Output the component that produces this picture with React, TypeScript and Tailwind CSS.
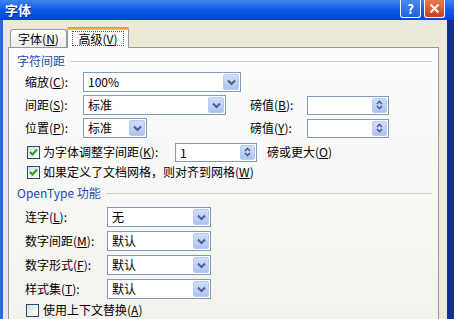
import React from "react";

function Key({ k }: { k: string }) {
  return (
    <>
      (<u>{k}</u>)
    </>
  );
}

function DropBtn() {
  return (
    <div className="flex w-[16px] items-center justify-center rounded-[2px] border border-[#b9cbf3] bg-gradient-to-b from-[#d0defd] to-[#adc3f3]">
      <svg width="9" height="7" viewBox="0 0 9 7">
        <path d="M1 1.5 L4.5 5 L8 1.5" fill="none" stroke="#4d6185" strokeWidth="2" />
      </svg>
    </div>
  );
}

function SpinBtn() {
  return (
    <div className="flex w-[15px] items-center justify-center rounded-[2px] border border-[#b9cbf3] bg-gradient-to-b from-[#d0defd] to-[#adc3f3]">
      <svg width="9" height="12" viewBox="0 0 9 12">
        <path d="M2 5 L4.5 2.5 L7 5" fill="none" stroke="#4d6185" strokeWidth="1.6" />
        <path d="M2 7 L4.5 9.5 L7 7" fill="none" stroke="#4d6185" strokeWidth="1.6" />
      </svg>
    </div>
  );
}

function Combo({ w, value }: { w: string; value?: string }) {
  return (
    <div className={`flex h-[20px] border border-[#7f9db9] bg-white p-px ${w}`}>
      <span className="flex-1 pl-[3px] text-[12px] leading-[16px]">{value}</span>
      <DropBtn />
    </div>
  );
}

function Spin({ value }: { value?: string }) {
  return (
    <div className="flex h-[19px] w-[82px] border border-[#7f9db9] bg-white p-px">
      <span className="flex-1 pl-[3px] text-[12px] leading-[15px]">{value}</span>
      <SpinBtn />
    </div>
  );
}

function Check({ on }: { on?: boolean }) {
  return (
    <div className="flex h-[13px] w-[13px] shrink-0 items-center justify-center border border-[#1c5180] bg-gradient-to-br from-[#dcdcd7] to-white">
      {on && (
        <svg width="11" height="11" viewBox="0 0 11 11">
          <path d="M2 5 L4.5 7.5 L9 2.5" fill="none" stroke="#21a121" strokeWidth="2" />
        </svg>
      )}
    </div>
  );
}

function Group({ title }: { title: string }) {
  return (
    <div className="flex h-[14px] items-center pl-[8px] pr-[6px]">
      <span className="text-[12px] leading-[14px] text-[#1f4aa8]">{title}</span>
      <div className="ml-[5px] h-px flex-1 bg-[#d0d0bf]" />
    </div>
  );
}

function Row({ label, lw, children, mt }: { label: React.ReactNode; lw: string; children: React.ReactNode; mt: string }) {
  return (
    <div className={`flex h-[20px] items-center pl-[16px] ${mt}`}>
      <span className={`text-[12px] ${lw}`}>{label}</span>
      {children}
    </div>
  );
}

export default function App() {
  return (
    <div className="relative h-[319px] w-[454px] overflow-hidden bg-[#ece9d8] font-['Noto_Sans_CJK_SC',sans-serif] text-black">
      {/* title bar */}
      <div className="flex h-[20px] items-start justify-between bg-gradient-to-b from-[#3d83f0] via-[#0b5ae6] to-[#0046d4] pl-[5px] pr-[9px]">
        <span className="mt-[1px] text-[13px] font-bold leading-[17px] text-white [text-shadow:1px_1px_0_#0a2a8a]">字体</span>
        <div className="flex gap-[3px]">
          <div className="flex h-[18px] w-[21px] items-center justify-center rounded-b-[3px] border border-t-0 border-white bg-gradient-to-b from-[#4a8af5] to-[#1f5fe0] text-[13px] font-bold leading-none text-white">
            ?
          </div>
          <div className="flex h-[18px] w-[21px] items-center justify-center rounded-b-[3px] border border-t-0 border-white bg-gradient-to-b from-[#ea7a52] to-[#cc3e14]">
            <svg width="11" height="11" viewBox="0 0 11 11">
              <path d="M1.5 1.5 L9.5 9.5 M9.5 1.5 L1.5 9.5" stroke="white" strokeWidth="2" />
            </svg>
          </div>
        </div>
      </div>

      <div className="flex h-[299px]">
        <div className="w-[3px] bg-[#2f67dc]" />
        <div className="flex-1 pl-[5px] pr-[8px]">
          {/* tabs */}
          <div className="flex h-[27px] items-end pl-[2px]">
            <div className="flex h-[18px] w-[57px] items-center justify-center rounded-t-[3px] border border-b-0 border-[#919b9c] bg-gradient-to-b from-white to-[#ecebe6] text-[12px]">
              字体<Key k="N" />
            </div>
            <div className="relative z-10 -mb-px flex h-[21px] w-[62px] flex-col rounded-t-[3px] border border-b-0 border-[#919b9c] bg-[#fcfcfe]">
              <div className="-mx-px -mt-px h-[3px] rounded-t-[3px] bg-gradient-to-b from-[#e68b2c] to-[#ffc73c]" />
              <div className="mx-[4px] mt-[1px] flex h-[15px] items-center justify-center border border-dotted border-[#555] text-[12px]">
                高级<Key k="V" />
              </div>
            </div>
          </div>

          {/* panel */}
          <div className="h-[290px] border border-[#919b9c] bg-gradient-to-b from-[#fcfcfe] to-[#f3f2ec]">
            <div className="mt-[6px]">
              <Group title="字符间距" />
            </div>
            <Row label={<>缩放<Key k="C" />:</>} lw="w-[58px]" mt="mt-[4px]">
              <Combo w="w-[158px]" value="100%" />
            </Row>
            <Row label={<>间距<Key k="S" />:</>} lw="w-[58px]" mt="mt-[3px]">
              <Combo w="w-[143px]" value="标准" />
              <span className="ml-[24px] w-[57px] text-[12px]">
                磅值<Key k="B" />:
              </span>
              <Spin />
            </Row>
            <Row label={<>位置<Key k="P" />:</>} lw="w-[58px]" mt="mt-[3px]">
              <Combo w="w-[64px]" value="标准" />
              <span className="ml-[103px] w-[57px] text-[12px]">
                磅值<Key k="Y" />:
              </span>
              <Spin />
            </Row>
            <div className="mt-[4px] flex h-[20px] items-center pl-[18px]">
              <Check on />
              <span className="ml-[3px] w-[132px] text-[12px]">
                为字体调整字间距<Key k="K" />:
              </span>
              <Spin value="1" />
              <span className="ml-[10px] text-[12px]">
                磅或更大<Key k="O" />
              </span>
            </div>
            <div className="mt-[3px] flex h-[14px] items-center pl-[18px]">
              <Check on />
              <span className="ml-[3px] text-[12px]">
                如果定义了文档网格，则对齐到网格<Key k="W" />
              </span>
            </div>
            <div className="mt-[7px]">
              <Group title="OpenType 功能" />
            </div>
            <Row label={<>连字<Key k="L" />:</>} lw="w-[82px]" mt="mt-[7px]">
              <Combo w="w-[104px]" value="无" />
            </Row>
            <Row label={<>数字间距<Key k="M" />:</>} lw="w-[82px]" mt="mt-[4px]">
              <Combo w="w-[104px]" value="默认" />
            </Row>
            <Row label={<>数字形式<Key k="F" />:</>} lw="w-[82px]" mt="mt-[4px]">
              <Combo w="w-[104px]" value="默认" />
            </Row>
            <Row label={<>样式集<Key k="T" />:</>} lw="w-[82px]" mt="mt-[4px]">
              <Combo w="w-[104px]" value="默认" />
            </Row>
            <div className="mt-[4px] flex h-[14px] items-center pl-[17px]">
              <Check />
              <span className="ml-[4px] text-[12px]">
                使用上下文替换<Key k="A" />
              </span>
            </div>
          </div>
        </div>
        <div className="w-[7px] bg-[#13308c]" />
      </div>
    </div>
  );
}
